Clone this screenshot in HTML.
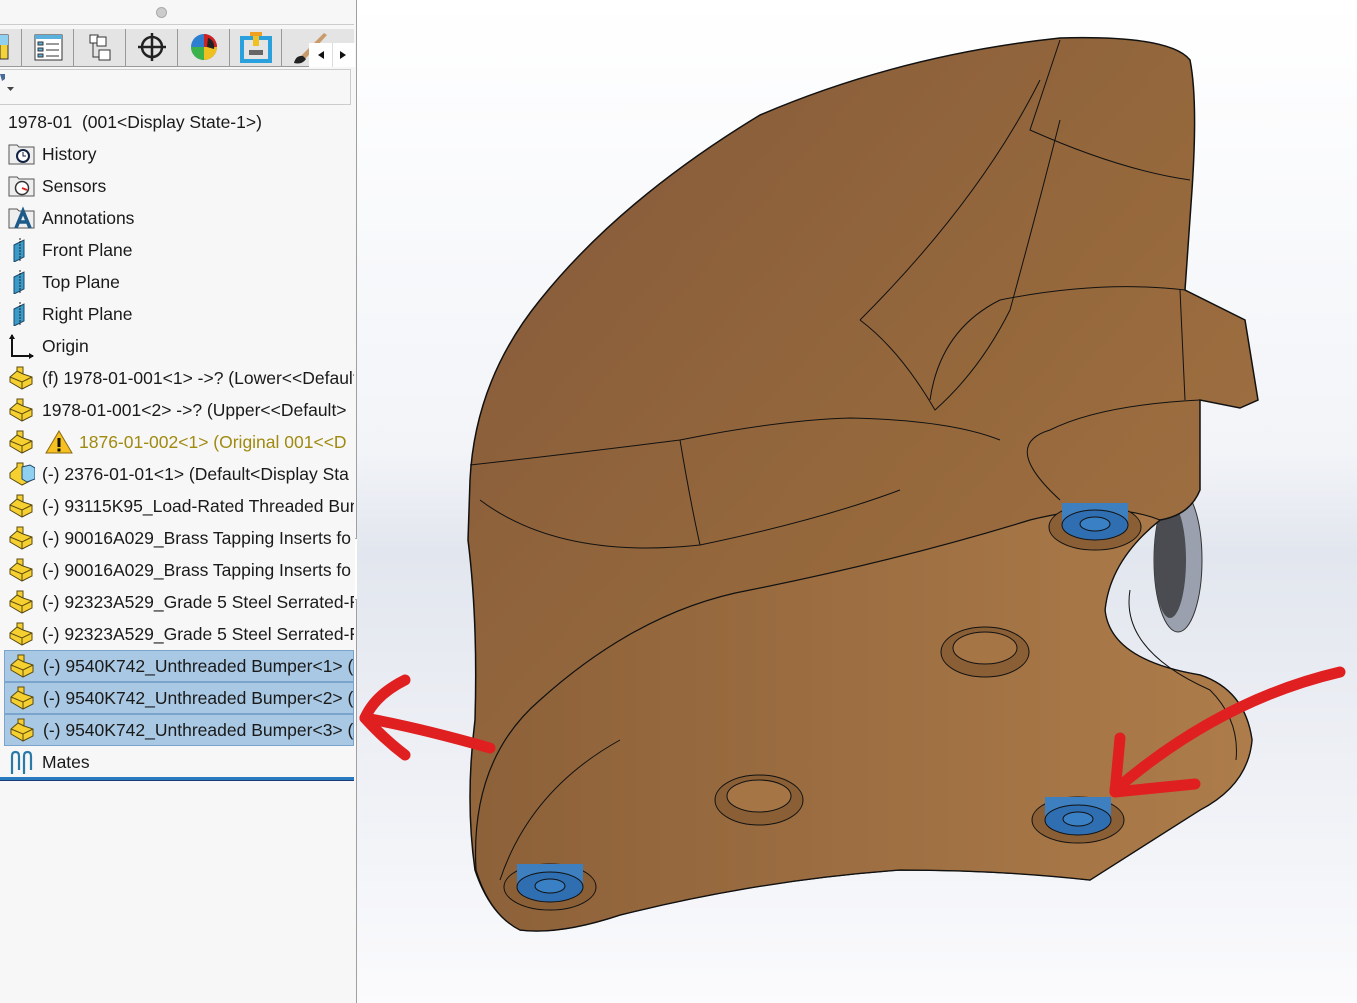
<!DOCTYPE html>
<html><head><meta charset="utf-8"><style>
body{margin:0;width:1357px;height:1003px;overflow:hidden;background:#fff;font-family:"Liberation Sans",sans-serif;position:relative}
#left{position:absolute;left:0;top:0;width:356px;height:1003px;background:#f7f7f7;border-right:1px solid #a0a0a0}
.row{position:absolute;left:0;height:30px;line-height:30px;font-size:17.5px;color:#1a1a1a;white-space:nowrap;width:354px;overflow:hidden}
.row .t{position:absolute;left:42px}
.sel{background:#a9c8e4;border:1px solid #7aa4cc;box-sizing:border-box}
.ic{position:absolute;left:8px;top:3px;width:27px;height:24px}
</style></head><body>
<div id="left">
<div style="position:absolute;left:156px;top:7px;width:9px;height:9px;border-radius:50%;background:#ccc;border:1px solid #aaa"></div>
<div style="position:absolute;left:0;top:24px;width:354px;height:1px;background:#ccc"></div>
<div style="position:absolute;left:0;top:29px;width:354px;height:37px;background:#e4e4e4;border-bottom:1px solid #999"></div>
<svg style="position:absolute;left:0;top:29px" width="356" height="40">
<g stroke="#999" stroke-width="1"><line x1="21.5" y1="0" x2="21.5" y2="37"/><line x1="73.5" y1="0" x2="73.5" y2="37"/><line x1="125.5" y1="0" x2="125.5" y2="37"/><line x1="177.5" y1="0" x2="177.5" y2="37"/><line x1="229.5" y1="0" x2="229.5" y2="37"/><line x1="281.5" y1="0" x2="281.5" y2="37"/></g>
<rect x="0" y="6" width="8" height="24" fill="#f3d23c" stroke="#333"/><rect x="0" y="6" width="8" height="10" fill="#8fd0f0"/>
<rect x="35" y="6" width="27" height="25" fill="#fff" stroke="#333"/><rect x="35" y="6" width="27" height="4" fill="#5ab0dd"/><g fill="#5ab0dd" stroke="#333"><rect x="38" y="13" width="5" height="3"/><rect x="38" y="19" width="5" height="3"/><rect x="38" y="25" width="5" height="3"/></g><g stroke="#333"><line x1="46" y1="15" x2="59" y2="15"/><line x1="46" y1="21" x2="59" y2="21"/><line x1="46" y1="27" x2="59" y2="27"/></g>
<g fill="#fff" stroke="#333"><rect x="90" y="6" width="8" height="8"/><rect x="97" y="8" width="9" height="9"/><rect x="99" y="21" width="11" height="10"/><path d="M93 14V28H99" fill="none"/></g>
<circle cx="152" cy="18" r="10" fill="none" stroke="#222" stroke-width="2.5"/><path d="M152 4V32M138 18H166" stroke="#222" stroke-width="2.5"/>
<circle cx="204" cy="18" r="13" fill="#2f7fd0"/><path d="M191 18A13 13 0 0 0 204 31V18Z" fill="#3cb34a"/><path d="M204 31A13 13 0 0 0 217 18H204Z" fill="#f0c020"/><path d="M204 5A13 13 0 0 1 217 18L204 18Z" fill="#d02020"/><path d="M208 9A7 9 0 0 1 214 20L207 18Z" fill="#222"/>
<rect x="242" y="9" width="28" height="23" fill="none" stroke="#2aa0dd" stroke-width="4"/><rect x="250" y="3" width="12" height="4" fill="#f0a020"/><rect x="253" y="7" width="6" height="10" fill="#f0c020"/><rect x="249" y="21" width="14" height="5" fill="#666"/>
<path d="M296 33L302 26L324 4L327 6L306 29Z" fill="#c99a6a"/><path d="M294 34Q296 26 303 27L306 30Q302 36 294 34Z" fill="#222"/>
<rect x="309" y="14" width="46" height="24" fill="#fff"/><path d="M324 22L318 26L324 30Z M340 22L346 26L340 30Z" fill="#111"/><line x1="332.5" y1="14" x2="332.5" y2="38" stroke="#ddd"/>
</svg>
<div style="position:absolute;left:0;top:69px;width:350px;height:34px;border:1px solid #ccc;border-left:none;background:#f7f7f7"></div>
<svg style="position:absolute;left:0;top:72px" width="20" height="22"><path d="M0 2H5V7L2 9Z" fill="#4a6a9a"/><path d="M7 15H14L10.5 19Z" fill="#444"/></svg>
<div class="row" style="top:107px"><span style="position:absolute;left:8px">1978-01&nbsp; (001&lt;Display State-1&gt;)</span></div>

<div class="row" style="top:139px"><svg class="ic" viewBox="0 0 27 24"><path d="M1 3H9L11 5H26V22H1Z" fill="#eee" stroke="#555"/><circle cx="15" cy="14" r="6" fill="#fff" stroke="#124" stroke-width="2"/><path d="M15 10V14H18" stroke="#124" fill="none"/></svg><span class="t">History</span></div>
<div class="row" style="top:171px"><svg class="ic" viewBox="0 0 27 24"><path d="M1 3H9L11 5H26V22H1Z" fill="#eee" stroke="#555"/><circle cx="14" cy="14" r="6.5" fill="#fff" stroke="#333" stroke-width="1.5"/><path d="M14 14L19 16" stroke="#d22" stroke-width="2"/></svg><span class="t">Sensors</span></div>
<div class="row" style="top:203px"><svg class="ic" viewBox="0 0 27 24"><path d="M1 3H9L11 5H26V22H1Z" fill="#eee" stroke="#555"/><path d="M8 22L15 5L22 22M10.5 16H19" stroke="#1c5a8a" stroke-width="3.5" fill="none"/></svg><span class="t">Annotations</span></div>
<div class="row" style="top:235px"><svg class="ic" viewBox="0 0 27 24"><path d="M6 7L16 2V19L6 24Z" fill="#3a9ac8" stroke="#1a4a6a"/><line x1="12" y1="0" x2="12" y2="24" stroke="#222" stroke-dasharray="2 1"/></svg><span class="t">Front Plane</span></div>
<div class="row" style="top:267px"><svg class="ic" viewBox="0 0 27 24"><path d="M6 7L16 2V19L6 24Z" fill="#3a9ac8" stroke="#1a4a6a"/><line x1="12" y1="0" x2="12" y2="24" stroke="#222" stroke-dasharray="2 1"/></svg><span class="t">Top Plane</span></div>
<div class="row" style="top:299px"><svg class="ic" viewBox="0 0 27 24"><path d="M6 7L16 2V19L6 24Z" fill="#3a9ac8" stroke="#1a4a6a"/><line x1="12" y1="0" x2="12" y2="24" stroke="#222" stroke-dasharray="2 1"/></svg><span class="t">Right Plane</span></div>
<div class="row" style="top:331px"><svg class="ic" viewBox="0 0 27 24" style="top:2px;height:26px"><path d="M4 1V22H25" stroke="#111" stroke-width="2" fill="none"/><path d="M1 5L4 0L7 5Z M21 19L26 22L21 25Z" fill="#111"/></svg><span class="t">Origin</span></div>

<div class="row" style="top:363px"><svg class="ic" viewBox="0 0 27 24"><path d="M2 11L9 5V1L15 1V8L24 11V18L14 23L2 16Z" fill="#f5d030" stroke="#5a4a10"/><path d="M2 11L14 16L24 11M14 16V23M9 5L15 8" fill="none" stroke="#5a4a10"/></svg><span class="t">(f) 1978-01-001&lt;1&gt; -&gt;? (Lower&lt;&lt;Default</span></div>
<div class="row" style="top:395px"><svg class="ic" viewBox="0 0 27 24"><path d="M2 11L9 5V1L15 1V8L24 11V18L14 23L2 16Z" fill="#f5d030" stroke="#5a4a10"/><path d="M2 11L14 16L24 11M14 16V23M9 5L15 8" fill="none" stroke="#5a4a10"/></svg><span class="t">1978-01-001&lt;2&gt; -&gt;? (Upper&lt;&lt;Default&gt;</span></div>
<div class="row" style="top:427px;color:#a08a10"><svg class="ic" viewBox="0 0 27 24"><path d="M2 11L9 5V1L15 1V8L24 11V18L14 23L2 16Z" fill="#f5d030" stroke="#5a4a10"/><path d="M2 11L14 16L24 11M14 16V23M9 5L15 8" fill="none" stroke="#5a4a10"/></svg><svg style="position:absolute;left:45px;top:3px" width="28" height="24"><path d="M14 1L27 23H1Z" fill="#f5c020" stroke="#8a6a10"/><rect x="12.5" y="8" width="3" height="9" fill="#111"/><rect x="12.5" y="18.5" width="3" height="3" fill="#111"/></svg><span class="t" style="left:79px">1876-01-002&lt;1&gt; (Original 001&lt;&lt;D</span></div>
<div class="row" style="top:459px"><svg class="ic" viewBox="0 0 27 24"><path d="M2 11L9 5V1L15 1V8L24 11V18L14 23L2 16Z" fill="#f5d030" stroke="#5a4a10"/><path d="M14 5L22 3L27 6V17L19 20L14 17Z" fill="#8fd0f0" stroke="#246"/></svg><span class="t">(-) 2376-01-01&lt;1&gt; (Default&lt;Display Sta</span></div>
<div class="row" style="top:491px"><svg class="ic" viewBox="0 0 27 24"><path d="M2 11L9 5V1L15 1V8L24 11V18L14 23L2 16Z" fill="#f5d030" stroke="#5a4a10"/><path d="M2 11L14 16L24 11M14 16V23M9 5L15 8" fill="none" stroke="#5a4a10"/></svg><span class="t">(-) 93115K95_Load-Rated Threaded Bum</span></div>
<div class="row" style="top:523px"><svg class="ic" viewBox="0 0 27 24"><path d="M2 11L9 5V1L15 1V8L24 11V18L14 23L2 16Z" fill="#f5d030" stroke="#5a4a10"/><path d="M2 11L14 16L24 11M14 16V23M9 5L15 8" fill="none" stroke="#5a4a10"/></svg><span class="t">(-) 90016A029_Brass Tapping Inserts fo</span></div>
<div class="row" style="top:555px"><svg class="ic" viewBox="0 0 27 24"><path d="M2 11L9 5V1L15 1V8L24 11V18L14 23L2 16Z" fill="#f5d030" stroke="#5a4a10"/><path d="M2 11L14 16L24 11M14 16V23M9 5L15 8" fill="none" stroke="#5a4a10"/></svg><span class="t">(-) 90016A029_Brass Tapping Inserts fo</span></div>
<div class="row" style="top:587px"><svg class="ic" viewBox="0 0 27 24"><path d="M2 11L9 5V1L15 1V8L24 11V18L14 23L2 16Z" fill="#f5d030" stroke="#5a4a10"/><path d="M2 11L14 16L24 11M14 16V23M9 5L15 8" fill="none" stroke="#5a4a10"/></svg><span class="t">(-) 92323A529_Grade 5 Steel Serrated-F</span></div>
<div class="row" style="top:619px"><svg class="ic" viewBox="0 0 27 24"><path d="M2 11L9 5V1L15 1V8L24 11V18L14 23L2 16Z" fill="#f5d030" stroke="#5a4a10"/><path d="M2 11L14 16L24 11M14 16V23M9 5L15 8" fill="none" stroke="#5a4a10"/></svg><span class="t">(-) 92323A529_Grade 5 Steel Serrated-F</span></div>
<div class="row sel" style="top:650px;left:4px;width:350px;height:32px"><svg class="ic" viewBox="0 0 27 24" style="left:4px"><path d="M2 11L9 5V1L15 1V8L24 11V18L14 23L2 16Z" fill="#f5d030" stroke="#5a4a10"/><path d="M2 11L14 16L24 11M14 16V23M9 5L15 8" fill="none" stroke="#5a4a10"/></svg><span class="t" style="left:38px">(-) 9540K742_Unthreaded Bumper&lt;1&gt; (</span></div>
<div class="row sel" style="top:682px;left:4px;width:350px;height:32px"><svg class="ic" viewBox="0 0 27 24" style="left:4px"><path d="M2 11L9 5V1L15 1V8L24 11V18L14 23L2 16Z" fill="#f5d030" stroke="#5a4a10"/><path d="M2 11L14 16L24 11M14 16V23M9 5L15 8" fill="none" stroke="#5a4a10"/></svg><span class="t" style="left:38px">(-) 9540K742_Unthreaded Bumper&lt;2&gt; (</span></div>
<div class="row sel" style="top:714px;left:4px;width:350px;height:32px"><svg class="ic" viewBox="0 0 27 24" style="left:4px"><path d="M2 11L9 5V1L15 1V8L24 11V18L14 23L2 16Z" fill="#f5d030" stroke="#5a4a10"/><path d="M2 11L14 16L24 11M14 16V23M9 5L15 8" fill="none" stroke="#5a4a10"/></svg><span class="t" style="left:38px">(-) 9540K742_Unthreaded Bumper&lt;3&gt; (</span></div>
<div class="row" style="top:747px"><svg class="ic" viewBox="0 0 27 24" style="height:26px;top:2px"><path d="M4 24V6Q4 2 7.5 2Q11 2 11 6V20M16 24V6Q16 2 19.5 2Q23 2 23 6V20" stroke="#2a7aa8" stroke-width="2.2" fill="none"/></svg><span class="t">Mates</span></div>
<div style="position:absolute;left:0;top:777px;width:354px;height:3px;background:#2a7ac0"></div>
<div style="position:absolute;left:0;top:780px;width:354px;height:1px;background:#1a3a7a"></div>
<div style="position:absolute;left:355px;top:538px;width:14px;height:60px;background:#fff;border:1px solid #aaa;border-left:none"></div>
<div style="position:absolute;left:357px;top:562px;width:8px;height:8px;border-radius:50%;background:#ddd;border:1px solid #aaa"></div>
</div>

<svg style="position:absolute;left:357px;top:0" width="1000" height="1003" viewBox="357 0 1000 1003">
<defs>
<linearGradient id="bg" x1="0" y1="0" x2="0" y2="1"><stop offset="0" stop-color="#ffffff"/><stop offset="0.45" stop-color="#f2f4f8"/><stop offset="0.55" stop-color="#e2e6ee"/><stop offset="1" stop-color="#fbfbfd"/></linearGradient>
<linearGradient id="w" x1="0" y1="0" x2="1" y2="1"><stop offset="0" stop-color="#84593a"/><stop offset="0.5" stop-color="#95683c"/><stop offset="1" stop-color="#a57444"/></linearGradient>
<linearGradient id="w2" x1="0" y1="0" x2="1" y2="0"><stop offset="0" stop-color="#8d6139"/><stop offset="1" stop-color="#ad7c4a"/></linearGradient>
</defs>
<rect x="357" y="0" width="1000" height="1003" fill="url(#bg)"/>
<ellipse cx="1178" cy="560" rx="24" ry="72" fill="#9aa0ae" stroke="#333"/>
<ellipse cx="1170" cy="560" rx="16" ry="58" fill="#4a4c52"/>
<path d="M470 480Q475 380 540 300Q620 200 760 115Q900 55 1060 38Q1170 35 1190 60Q1198 100 1192 190L1185 290L1245 320L1258 400L1240 408L1200 400L1200 490Q1190 515 1160 520Q1110 560 1105 610Q1110 660 1200 675Q1245 690 1252 740Q1248 785 1200 810L1090 880Q1000 870 900 870Q760 880 620 915Q560 935 520 930Q490 915 475 870Q465 800 475 720Q478 620 468 540Z" fill="url(#w)" stroke="#111" stroke-width="1.5"/>
<path d="M476 870Q470 760 540 700Q640 610 750 590Q900 560 1030 520Q1110 500 1160 520Q1110 560 1105 610Q1110 660 1200 675Q1245 690 1252 740Q1248 785 1200 810L1090 880Q1000 870 900 870Q760 880 620 915Q560 935 520 930Q490 915 476 870Z" fill="url(#w2)" stroke="#111" stroke-width="1.2"/>
<g fill="none" stroke="#111" stroke-width="1">
<path d="M470 465Q560 455 680 440Q780 420 850 418Q950 420 1000 440"/>
<path d="M1190 180Q1120 170 1030 130L1060 40"/>
<path d="M1185 290Q1100 280 1000 300Q940 330 930 400"/>
<path d="M680 440Q690 500 700 545"/>
<path d="M860 320Q900 350 935 410Q980 370 1010 310Q1040 200 1060 120"/>
<path d="M1200 400Q1100 405 1050 430Q1000 445 1060 500"/>
<path d="M1180 290L1185 400"/>
<path d="M480 500Q560 560 700 545Q820 520 900 490"/>
<path d="M860 320Q980 200 1040 80"/>
<path d="M500 880Q530 790 620 740"/>
<path d="M1130 590Q1120 650 1210 690Q1240 720 1236 760"/>
</g>
<g>
<ellipse cx="985" cy="652" rx="44" ry="25" fill="#8a5f36" stroke="#111"/><ellipse cx="985" cy="648" rx="32" ry="16" fill="#a57546" stroke="#111"/>
<ellipse cx="759" cy="800" rx="44" ry="25" fill="#8a5f36" stroke="#111"/><ellipse cx="759" cy="796" rx="32" ry="16" fill="#a57546" stroke="#111"/>
<ellipse cx="1095" cy="527" rx="46" ry="23" fill="#8a5f36" stroke="#111"/>
<rect x="1062" y="503" width="66" height="20" fill="#3e7fc0"/><ellipse cx="1095" cy="525" rx="33" ry="15" fill="#2f6eb0" stroke="#111"/><ellipse cx="1095" cy="524" rx="15" ry="7" fill="#3a80c4" stroke="#111"/>
<ellipse cx="1078" cy="820" rx="46" ry="23" fill="#8a5f36" stroke="#111"/>
<rect x="1045" y="797" width="66" height="20" fill="#3e7fc0"/><ellipse cx="1078" cy="820" rx="33" ry="15" fill="#2f6eb0" stroke="#111"/><ellipse cx="1078" cy="819" rx="15" ry="7" fill="#3a80c4" stroke="#111"/>
<ellipse cx="550" cy="887" rx="46" ry="23" fill="#8a5f36" stroke="#111"/>
<rect x="517" y="864" width="66" height="20" fill="#3e7fc0"/><ellipse cx="550" cy="887" rx="33" ry="15" fill="#2f6eb0" stroke="#111"/><ellipse cx="550" cy="886" rx="15" ry="7" fill="#3a80c4" stroke="#111"/>
</g>
<g fill="none" stroke="#e02020" stroke-width="11" stroke-linecap="round" stroke-linejoin="round">
<path d="M490 748Q420 728 365 718"/>
<path d="M405 680Q375 695 365 718Q385 740 405 755"/>
<path d="M1340 672Q1220 700 1115 790"/>
<path d="M1120 738L1115 792L1195 784"/>
</g>
</svg>
</body></html>
